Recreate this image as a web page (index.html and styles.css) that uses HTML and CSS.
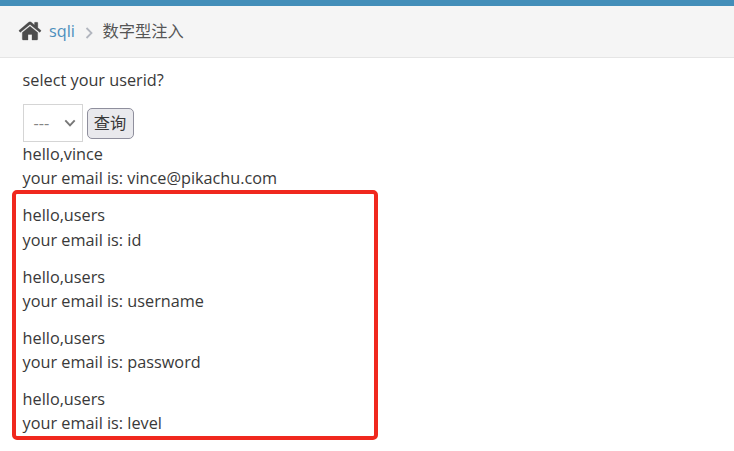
FILE: index.html
```html
<!DOCTYPE html>
<html lang="zh">
<head>
<meta charset="utf-8">
<title>数字型注入</title>
<link rel="stylesheet" href="styles.css">
</head>
<body>
<nav class="breadcrumbs">
<svg class="home" viewBox="0 0 24 20" width="24" height="20"><path d="M12 5.200 4.300 11.600V18.200q0 .8.8.8H10v-5.500h4V19h4.900q.8 0 .8-.8V11.600Z"/><path d="M12 .8q.8 0 1.400.5L16.500 4V1.800q0-.5.5-.5h2.300q.5 0 .5.500v5l3 2.500q.4.400.1.700l-.8 1q-.4.400-.8.100L12 3.400 2.700 11.100q-.4.300-.8-.1l-.8-1q-.3-.3.100-.7L10.600 1.300q.6-.5 1.400-.5Z"/></svg>
<a class="link" href="#">sqli</a>
<svg class="sep" viewBox="0 0 8 12" width="8" height="12"><path d="m1.500 1 5 5-5 5"/></svg>
<span class="current">数字型注入</span>
</nav>
<main class="content">
<p class="prompt">select your userid?</p>
<form class="query">
<div class="select"><span>---</span><svg viewBox="0 0 12 8" width="12" height="8"><path d="m1.300 1.300 4.700 5 4.700-5"/></svg></div>
<button class="submit" type="button">查询</button>
</form>
<p class="result">hello,vince<br>your email is: vince@pikachu.com</p>
<section class="highlight">
<p class="result">hello,users<br>your email is: id</p>
<p class="result">hello,users<br>your email is: username</p>
<p class="result">hello,users<br>your email is: password</p>
<p class="result">hello,users<br>your email is: level</p>
</section>
</main>
</body>
</html>
```

FILE: styles.css
```css
* { box-sizing: border-box; }
body {
  margin: 0;
  border-top: 6px solid #438eb9;
  background: #fff;
  color: #393939;
  font: 16.25px/24px "Open Sans", "Noto Sans CJK SC", sans-serif;
}
.breadcrumbs {
  display: flex;
  align-items: center;
  height: 52px;
  padding: 0 0 1px 18px;
  background: #f5f5f5;
  border-bottom: 1px solid #e5e5e5;
}
.home { fill: #4c4c4c; stroke: #4c4c4c; stroke-width: .3; margin: 0 7px 0 0; }
.link { color: #4c8fbd; text-decoration: none; }
.sep { margin: 3px 9px 0 10.500px; fill: none; stroke: #b2b6bf; stroke-width: 1.8; }
.current { color: #555; }
.content { padding: 10px 11.600px 0; }
.prompt { margin: 0 0 12px 11px; }
.query { display: flex; align-items: center; gap: 4px; height: 38px; margin: 0 0 0 11px; }
.select {
  display: flex;
  align-items: center;
  justify-content: space-between;
  width: 60px;
  height: 38px;
  padding: 0 6px 0 10px;
  border: 1px solid #d5d5d5;
  color: #858585;
}
.select svg { fill: none; stroke: #777; stroke-width: 1.9; }
.submit {
  width: 47px;
  height: 31px;
  padding: 0;
  border: 1px solid #8f8f9d;
  border-radius: 5px;
  background: #e9e9ed;
  color: #393939;
  font: inherit;
}
.result { margin: 0 0 0 11px; }
.highlight {
  display: flex;
  flex-direction: column;
  gap: 12.600px;
  width: 366px;
  height: 250px;
  padding-top: 9.400px;
  border: 4px solid #f0281e;
  border-radius: 5px;
  line-height: 24.300px;
}
.highlight .result { margin-left: 7px; }
```
